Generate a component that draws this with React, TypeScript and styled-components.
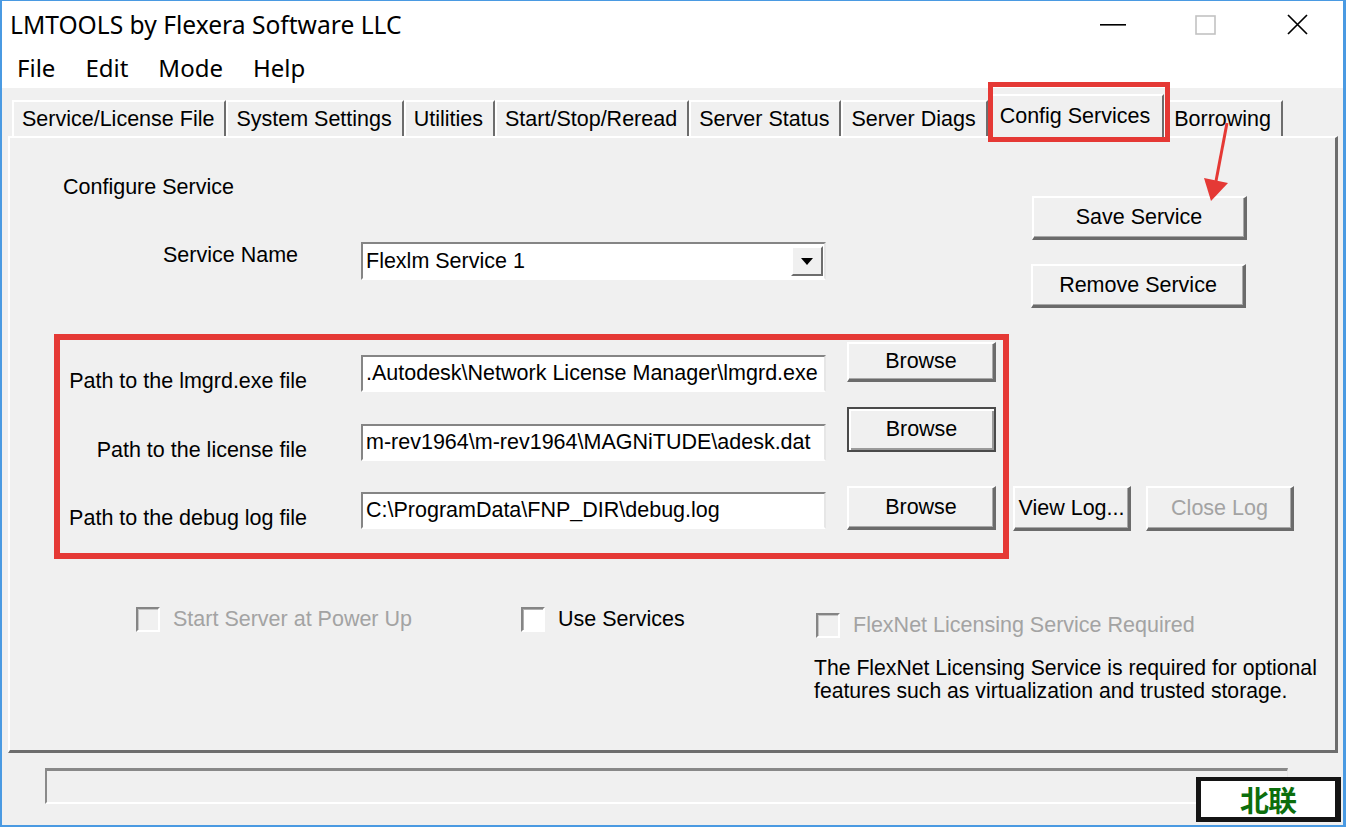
import React from "react";
import styled, { createGlobalStyle } from "styled-components";

const GlobalStyle = createGlobalStyle`
  html, body {
    margin: 0;
    padding: 0;
    background: #fff;
  }
  body {
    font-family: "Liberation Sans", Arial, sans-serif;
  }
`;

const Window = styled.div`
  position: relative;
  width: 1346px;
  height: 827px;
  box-sizing: border-box;
  border-style: solid;
  border-color: #4a9ae2;
  border-width: 1px 3px 2px 2px;
  background: #f0f0f0;
  display: flex;
  flex-direction: column;
  overflow: hidden;
`;

const TitleBar = styled.div`
  height: 47px;
  background: #fff;
  display: flex;
  align-items: center;
`;

const Title = styled.div`
  flex: 1;
  padding-left: 8px;
  font-family: "Noto Sans", "Open Sans", sans-serif;
  font-size: 24.6px;
  color: #000;
`;

const CaptionButton = styled.div`
  width: 92px;
  height: 47px;
  display: flex;
  align-items: center;
  justify-content: center;
`;

const MenuBar = styled.div`
  height: 40px;
  background: #fff;
  display: flex;
  align-items: center;
  gap: 30px;
  padding-left: 15px;
  font-family: "Noto Sans", "Open Sans", sans-serif;
  font-size: 24px;
  color: #000;
`;

const MenuItem = styled.span`
  line-height: 40px;
`;

const TabStrip = styled.div`
  height: 48px;
  display: flex;
  align-items: flex-end;
  padding-left: 10px;
`;

const Tab = styled.div<{ $active?: boolean }>`
  box-sizing: border-box;
  height: ${(p) => (p.$active ? 44 : 36)}px;
  margin-bottom: ${(p) => (p.$active ? -2 : 0)}px;
  position: relative;
  z-index: ${(p) => (p.$active ? 2 : 1)};
  display: flex;
  align-items: center;
  padding: ${(p) => (p.$active ? "0 12px 2px 10px" : "0 10px 0 8px")};
  border-style: solid;
  border-width: 2px 2px 0 2px;
  border-color: #fff #6d6d6d #fff #fff;
  background: #f0f0f0;
  font-size: 21.5px;
  color: #000;
  white-space: nowrap;
`;

const Panel = styled.div`
  box-sizing: border-box;
  width: 1330px;
  height: 617px;
  margin-left: 6px;
  padding-top: 37px;
  border-style: solid;
  border-width: 2px 3px 3px 2px;
  border-color: #fff #6d6d6d #6d6d6d #fff;
  display: flex;
  flex-direction: column;
  font-size: 21.5px;
  color: #000;
`;

const TopRow = styled.div`
  display: flex;
`;

const LeftCol = styled.div`
  display: flex;
  flex-direction: column;
`;

const Heading = styled.div`
  margin-left: 53px;
  line-height: 24px;
`;

const ServiceRow = styled.div`
  display: flex;
  align-items: flex-start;
  margin-top: 43px;
`;

const FieldLabel = styled.div<{ $w: number; $top: number }>`
  width: ${(p) => p.$w}px;
  margin-top: ${(p) => p.$top}px;
  text-align: right;
  line-height: 24px;
  white-space: nowrap;
`;

const Sunken = styled.div`
  box-sizing: border-box;
  width: 465px;
  background: #fff;
  border-style: solid;
  border-width: 2px;
  border-color: #858585 #e6e6e6 #fff #858585;
  display: flex;
  align-items: center;
  overflow: hidden;
  white-space: nowrap;
`;

const Combo = styled(Sunken)`
  height: 38px;
  margin-left: 63px;
  padding-left: 3px;
`;

const ComboText = styled.span`
  flex: 1;
`;

const ComboArrow = styled.div`
  box-sizing: border-box;
  width: 32px;
  height: 30px;
  margin-right: 1px;
  background: #f0f0f0;
  border-style: solid;
  border-width: 2px;
  border-color: #fff #6d6d6d #6d6d6d #fff;
  display: flex;
  align-items: center;
  justify-content: center;
`;

const RightCol = styled.div`
  display: flex;
  flex-direction: column;
  margin-left: 206px;
`;

const PushButton = styled.button<{ $w: number; $h: number; $top?: number; $focus?: boolean }>`
  box-sizing: border-box;
  width: ${(p) => p.$w}px;
  height: ${(p) => p.$h}px;
  margin-top: ${(p) => p.$top ?? 0}px;
  padding: 0;
  font-family: "Liberation Sans", Arial, sans-serif;
  font-size: 21.5px;
  color: #000;
  background: #f0f0f0;
  border-style: solid;
  border-width: ${(p) => (p.$focus ? "2px" : "2px 3px 3px 2px")};
  border-color: ${(p) => (p.$focus ? "#4a4a4a" : "#fff #6b6b6b #6b6b6b #fff")};
  box-shadow: ${(p) =>
    p.$focus ? "inset 2px 2px 0 #fff, inset -2px -2px 0 #9a9a9a" : "inset -1px -1px 0 #a8a8a8"};
  white-space: nowrap;
  &:disabled {
    color: #a3a3a3;
  }
`;

const MiddleRow = styled.div`
  display: flex;
  align-items: flex-end;
  margin-top: 26px;
`;

const RedFrame = styled.div`
  box-sizing: border-box;
  width: 955px;
  height: 225px;
  margin-left: 44px;
  padding-top: 2px;
  border: 6px solid #e53935;
  display: flex;
  flex-direction: column;
`;

const PathRow = styled.div<{ $h: number }>`
  display: flex;
  align-items: flex-start;
  height: ${(p) => p.$h}px;
`;

const PathInput = styled(Sunken)`
  height: 37px;
  margin-left: 54px;
  margin-top: 13px;
  padding-left: 3px;
`;

const BrowseButton = styled(PushButton)`
  margin-left: 21px;
`;

const LogGroup = styled.div`
  display: flex;
  gap: 15px;
  margin-left: 4px;
  margin-bottom: 28px;
`;

const BottomRow = styled.div`
  display: flex;
  align-items: flex-start;
  margin-top: 48px;
`;

const CheckItem = styled.div<{ $w?: number; $left?: number; $top?: number; $disabled?: boolean }>`
  display: flex;
  align-items: center;
  height: 25px;
  width: ${(p) => (p.$w ? `${p.$w}px` : "auto")};
  margin-left: ${(p) => p.$left ?? 0}px;
  margin-top: ${(p) => p.$top ?? 0}px;
  color: ${(p) => (p.$disabled ? "#a3a3a3" : "#000")};
  white-space: nowrap;
`;

const CheckBox = styled.span<{ $disabled?: boolean }>`
  box-sizing: border-box;
  width: 24px;
  height: 25px;
  margin-right: 13px;
  flex-shrink: 0;
  background: ${(p) => (p.$disabled ? "#f0f0f0" : "#fff")};
  border-style: solid;
  border-width: 2px;
  border-color: #858585 #fff #fff #858585;
  box-shadow: ${(p) => (p.$disabled ? "inset 1px 1px 0 #c4c4c4" : "inset 1px 1px 0 #b0b0b0")};
`;

const FlexNetGroup = styled.div`
  display: flex;
  flex-direction: column;
`;

const Note = styled.div`
  margin-top: 18px;
  line-height: 23px;
  font-size: 21.2px;
`;

const StatusBar = styled.div`
  box-sizing: border-box;
  width: 1243px;
  height: 36px;
  margin: 15px 0 0 43px;
  border-style: solid;
  border-width: 3px 1px 2px 2px;
  border-color: #888 #e8e8e8 #fff #8a8a8a;
  background: #f0f0f0;
`;

const TabMark = styled.div`
  position: absolute;
  left: 986px;
  top: 81px;
  width: 182px;
  height: 60px;
  box-sizing: border-box;
  border: 5px solid #e53935;
  z-index: 5;
  pointer-events: none;
`;

const ArrowMark = styled.svg`
  position: absolute;
  left: 1193px;
  top: 114px;
  z-index: 5;
  pointer-events: none;
`;

const Watermark = styled.div`
  position: absolute;
  left: 1194px;
  top: 776px;
  width: 145px;
  height: 45px;
  box-sizing: border-box;
  padding: 4px 6px 5px 5px;
  background: #141414;
  display: flex;
  z-index: 5;
`;

const WatermarkInner = styled.div`
  flex: 1;
  background: #fff;
  display: flex;
  align-items: center;
  justify-content: center;
  font-family: "Noto Sans CJK SC", sans-serif;
  font-weight: 700;
  font-size: 29px;
  letter-spacing: -1px;
  color: #0c6e0c;
`;

const tabs = [
  "Service/License File",
  "System Settings",
  "Utilities",
  "Start/Stop/Reread",
  "Server Status",
  "Server Diags",
  "Config Services",
  "Borrowing",
];

const paths = [
  { label: "Path to the lmgrd.exe file", value: ".Autodesk\\Network License Manager\\lmgrd.exe", h: 69, top: 0, bh: 40 },
  { label: "Path to the license file", value: "m-rev1964\\m-rev1964\\MAGNiTUDE\\adesk.dat", h: 68, top: -4, bh: 45, focus: true },
  { label: "Path to the debug log file", value: "C:\\ProgramData\\FNP_DIR\\debug.log", h: 70, top: 7, bh: 44 },
];

const App: React.FC = () => {
  return (
    <>
      <GlobalStyle />
      <Window>
        <TitleBar>
          <Title>LMTOOLS by Flexera Software LLC</Title>
          <CaptionButton>
            <svg width="26" height="2" viewBox="0 0 26 2">
              <rect x="0" y="0" width="26" height="1.6" fill="#000" />
            </svg>
          </CaptionButton>
          <CaptionButton>
            <svg width="21" height="20" viewBox="0 0 21 20">
              <rect x="1" y="1" width="19" height="18" fill="none" stroke="#c2c2c2" strokeWidth="1.6" />
            </svg>
          </CaptionButton>
          <CaptionButton>
            <svg width="21" height="21" viewBox="0 0 21 21">
              <path d="M1 1 L20 20 M20 1 L1 20" stroke="#000" strokeWidth="1.7" fill="none" />
            </svg>
          </CaptionButton>
        </TitleBar>

        <MenuBar>
          <MenuItem>File</MenuItem>
          <MenuItem>Edit</MenuItem>
          <MenuItem>Mode</MenuItem>
          <MenuItem>Help</MenuItem>
        </MenuBar>

        <TabStrip>
          {tabs.map((t) => (
            <Tab key={t} $active={t === "Config Services"}>
              {t}
            </Tab>
          ))}
        </TabStrip>

        <Panel>
          <TopRow>
            <LeftCol>
              <Heading>Configure Service</Heading>
              <ServiceRow>
                <FieldLabel $w={288} $top={1}>
                  Service Name
                </FieldLabel>
                <Combo>
                  <ComboText>Flexlm Service 1</ComboText>
                  <ComboArrow>
                    <svg width="12" height="7" viewBox="0 0 12 7">
                      <path d="M0 0 H12 L6 7 Z" fill="#000" />
                    </svg>
                  </ComboArrow>
                </Combo>
              </ServiceRow>
            </LeftCol>
            <RightCol>
              <PushButton $w={215} $h={44} $top={21}>
                Save Service
              </PushButton>
              <PushButton $w={215} $h={44} $top={24} style={{ marginLeft: -1 }}>
                Remove Service
              </PushButton>
            </RightCol>
          </TopRow>

          <MiddleRow>
            <RedFrame>
              {paths.map((p) => (
                <PathRow key={p.label} $h={p.h}>
                  <FieldLabel $w={247} $top={27}>
                    {p.label}
                  </FieldLabel>
                  <PathInput>{p.value}</PathInput>
                  <BrowseButton $w={149} $h={p.bh} $top={p.top} $focus={p.focus}>
                    Browse
                  </BrowseButton>
                </PathRow>
              ))}
            </RedFrame>
            <LogGroup>
              <PushButton $w={118} $h={45}>
                View Log...
              </PushButton>
              <PushButton $w={148} $h={45} disabled>
                Close Log
              </PushButton>
            </LogGroup>
          </MiddleRow>

          <BottomRow>
            <CheckItem $w={385} $left={126} $disabled>
              <CheckBox $disabled />
              Start Server at Power Up
            </CheckItem>
            <CheckItem $w={293}>
              <CheckBox />
              Use Services
            </CheckItem>
            <FlexNetGroup>
              <CheckItem $left={2} $top={6} $disabled>
                <CheckBox $disabled />
                FlexNet Licensing Service Required
              </CheckItem>
              <Note>
                The FlexNet Licensing Service is required for optional
                <br />
                features such as virtualization and trusted storage.
              </Note>
            </FlexNetGroup>
          </BottomRow>
        </Panel>

        <StatusBar />

        <TabMark />
        <ArrowMark width="45" height="95" viewBox="0 0 45 95">
          <line x1="32" y1="8" x2="21" y2="66" stroke="#e53935" strokeWidth="3" />
          <polygon points="9,63 33,68 16,86" fill="#e53935" />
        </ArrowMark>
        <Watermark>
          <WatermarkInner>北联</WatermarkInner>
        </Watermark>
      </Window>
    </>
  );
};

export default App;
